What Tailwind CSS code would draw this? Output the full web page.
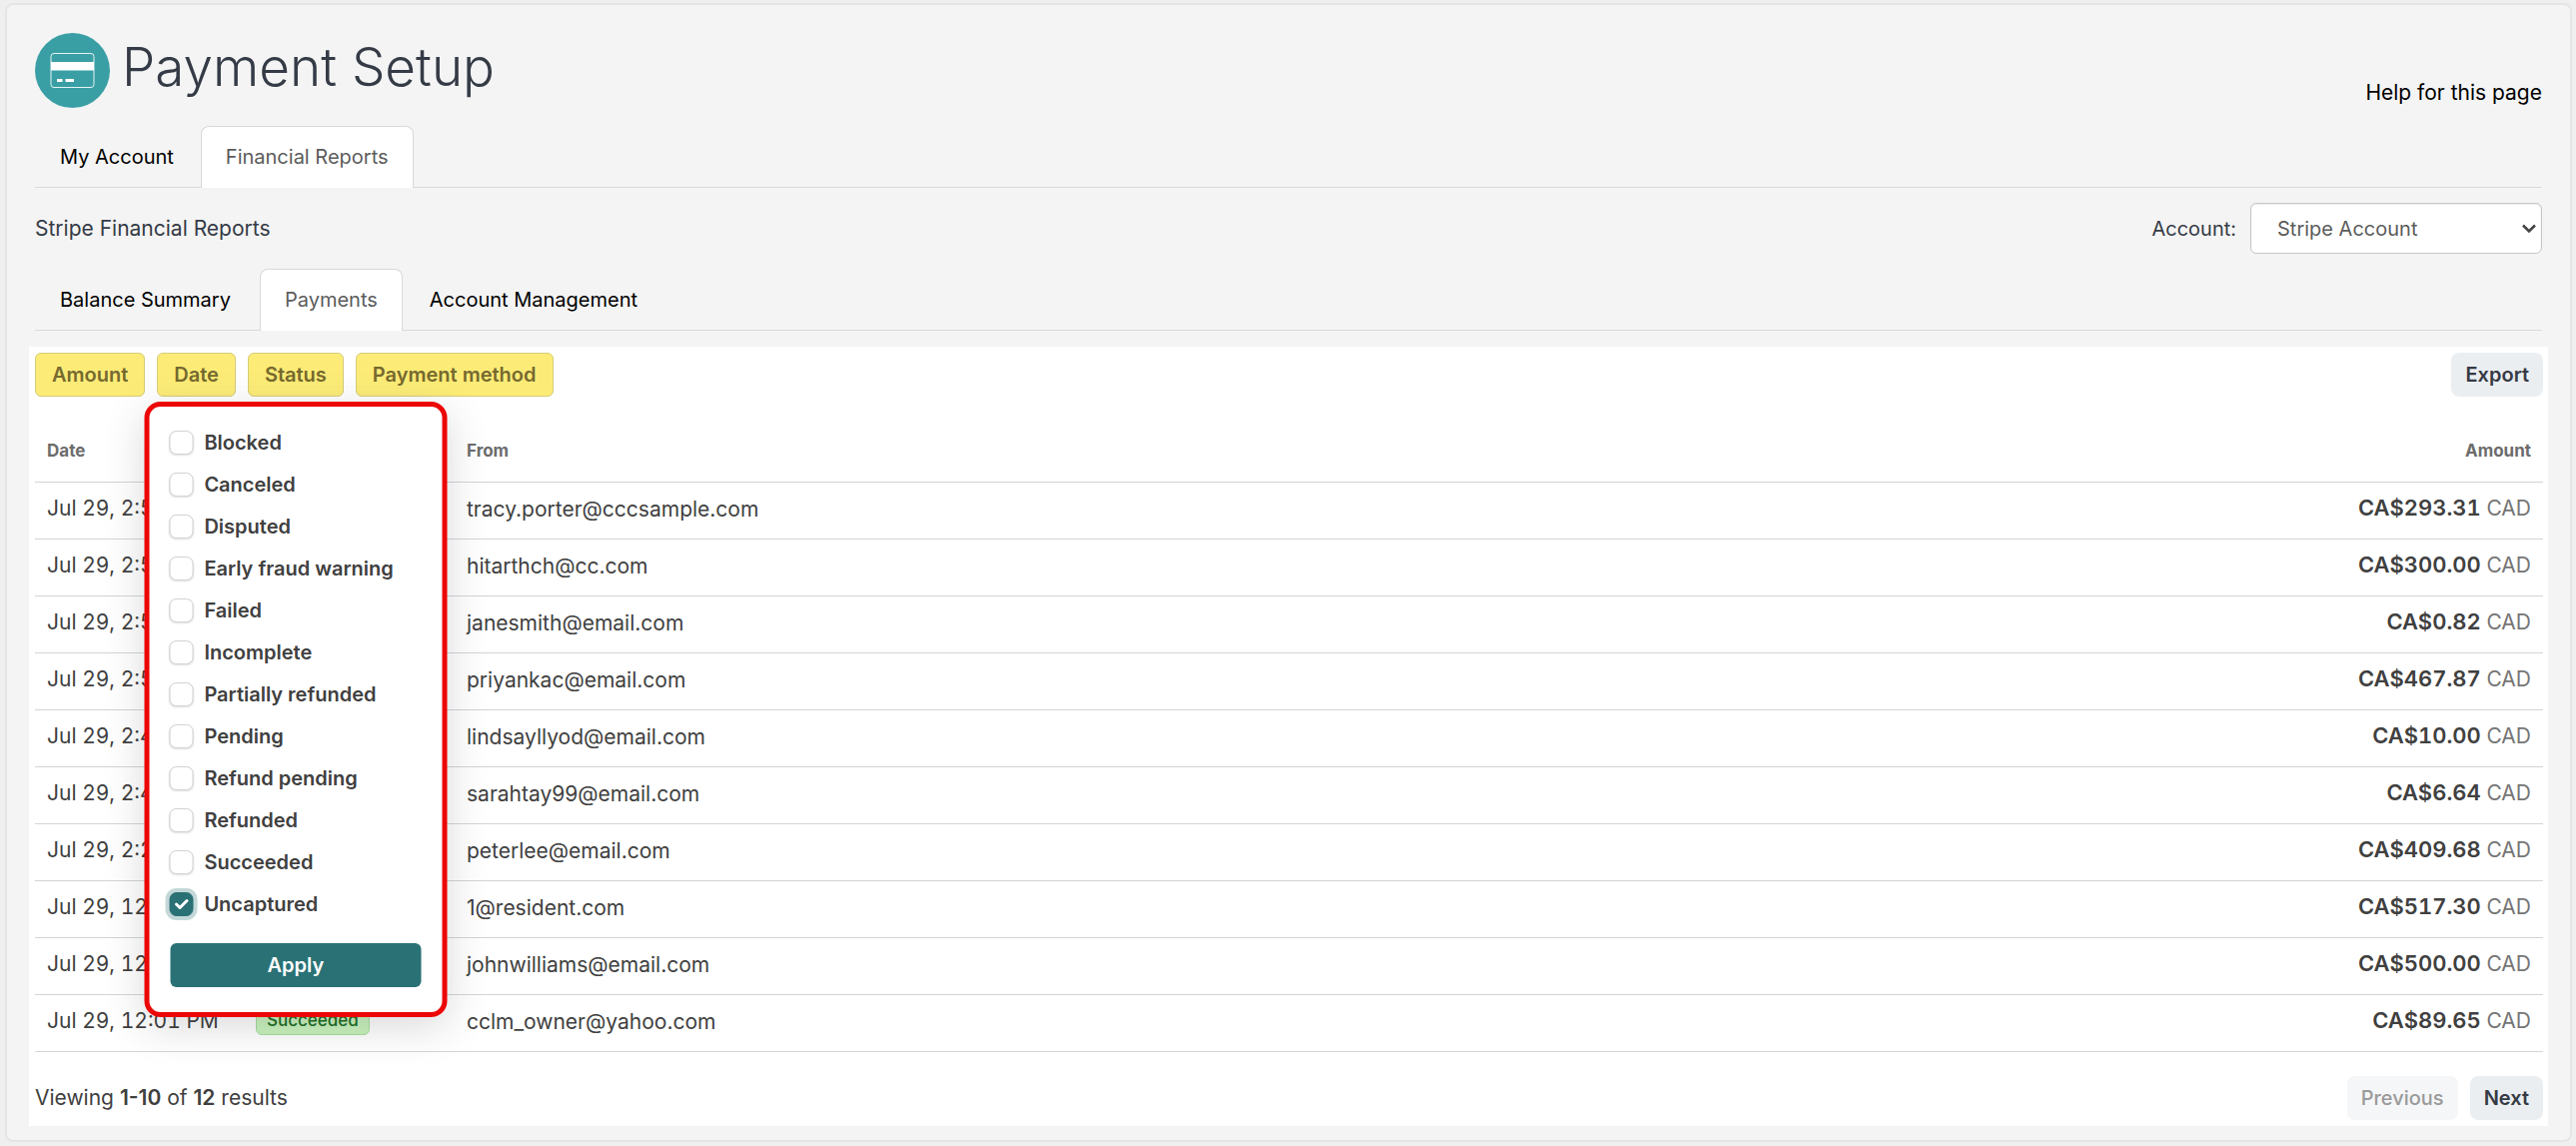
<!DOCTYPE html>
<html lang="en">
<head>
<meta charset="utf-8">
<title>Payment Setup</title>
<script src="https://cdn.jsdelivr.net/npm/@tailwindcss/browser@4"></script>
</head>
<body class="min-h-screen bg-[#efefef] pt-[3px] pr-1 pb-1 pl-[5px] font-['Inter',sans-serif] text-[20px] leading-7 text-[#353b46]">
<main class="rounded-lg border-2 border-[#e5e5e5] bg-[#f4f4f4] px-[22px] pt-7 pb-[14px]">
  <header class="flex items-start justify-between px-1.5">
    <div class="flex items-center gap-3">
      <svg class="h-[75px] w-[75px]" viewBox="0 0 75 75" aria-hidden="true">
        <circle cx="37.500" cy="37.500" r="37.500" fill="#3a9fa5"/>
        <rect x="16" y="20.500" width="43" height="34" rx="3" fill="none" stroke="#e3f3f3"/>
        <path d="M16 29h43v8.500H16z" fill="#fff"/>
        <path d="M22 46h5.500v3H22zM30.500 46H39v3h-8.500z" fill="#fff"/>
      </svg>
      <h1 class="pb-2 text-[53px] leading-[60px] font-light">Payment Setup</h1>
    </div>
    <a href="#help" class="pt-[46px] text-[21px] text-black">Help for this page</a>
  </header>

  <nav class="mx-1.5 mt-[18px] flex border-b border-[#d9d9d9] text-black" aria-label="Sections">
    <a href="#account" class="-mb-px border border-transparent px-6 pt-4 pb-4">My Account</a>
    <a href="#reports" class="-mb-px ml-0.5 rounded-t-lg border border-b-0 border-[#d9d9d9] bg-white px-6 pt-4 pb-4 text-[#5c5c5c]">Financial Reports</a>
  </nav>

  <div class="mx-1.5 mt-[15px] flex items-center justify-between">
    <h2 class="text-[21px]">Stripe Financial Reports</h2>
    <div class="flex items-center gap-[14px]">
      <label for="acct">Account:</label>
      <div class="relative">
        <select id="acct" class="block h-[51px] w-[292px] appearance-none rounded-md border border-[#c6c6c6] bg-white pl-[26px] text-[#5c5c5c] shadow-[inset_0_1px_2px_rgba(0,0,0,0.08)]"><option>Stripe Account</option></select>
        <svg class="pointer-events-none absolute top-5 right-[5px] h-3 w-4" viewBox="0 0 16 12" fill="none" stroke="#444" stroke-width="2.500" aria-hidden="true"><path d="M2 2.500l6 6 6-6"/></svg>
      </div>
    </div>
  </div>

  <nav class="mx-1.5 mt-[15px] flex border-b border-[#d9d9d9] text-black" aria-label="Stripe reports">
    <a href="#balance" class="-mb-px border border-transparent px-6 pt-4 pb-4">Balance Summary</a>
    <a href="#payments" class="-mb-px ml-1 rounded-t-lg border border-b-0 border-[#d9d9d9] bg-white px-6 pt-4 pb-4 text-[#5c5c5c]">Payments</a>
    <a href="#management" class="-mb-px ml-0.5 border border-transparent px-6 pt-4 pb-4">Account Management</a>
  </nav>

  <section class="mt-4 bg-white pt-1.5 pr-[5px] pb-1.5 pl-1.5 text-[#404040]">
    <div class="flex items-start justify-between">
      <div class="flex gap-3 font-semibold text-[#76692f]">
        <button class="h-11 rounded-md border border-[#d5cc7a] bg-[#fcec77] px-4">Amount</button>
        <button class="h-11 rounded-md border border-[#d5cc7a] bg-[#fcec77] px-4">Date</button>
        <div class="relative">
          <button class="h-11 rounded-md border border-[#d5cc7a] bg-[#fcec77] px-4" aria-expanded="true">Status</button>
          <form class="absolute top-[49px] left-1/2 z-10 w-[303px] -translate-x-1/2 rounded-2xl border-5 border-[#ec0606] bg-white px-[21px] pt-[15px] pb-[25px] text-[#404040] shadow-[0_10px_40px_rgba(48,49,61,0.18)]">
            <div id="statuses" class="-ml-px"></div>
            <button type="button" class="mt-[18px] h-11 w-full rounded-md bg-[#2a7175] text-white">Apply</button>
          </form>
        </div>
        <button class="h-11 rounded-md border border-[#d5cc7a] bg-[#fcec77] px-4">Payment method</button>
      </div>
      <button class="h-11 rounded-lg bg-[#ebeef1] px-[14px] font-semibold text-[#353a44]">Export</button>
    </div>

    <table class="mt-6 w-full table-fixed text-[21px]">
      <thead>
        <tr class="h-[61px] border-b border-[#d2d4d6] text-left text-[17px] text-[#6c6c6c]">
          <th class="w-[209px] px-3 font-bold">Date</th>
          <th class="w-[211px] px-3" aria-label="Status"></th>
          <th class="px-3 font-bold">From</th>
          <th class="w-[300px] px-3 text-right font-bold">Amount</th>
        </tr>
      </thead>
      <tbody id="rows"></tbody>
    </table>

    <footer class="mt-6 flex items-center justify-between">
      <p class="text-[21px]">Viewing <b class="font-semibold">1-10</b> of <b class="font-semibold">12</b> results</p>
      <div class="flex gap-3 font-medium">
        <button class="h-11 rounded-lg bg-[#f5f6f8] px-[14px] text-[#9a9a9a]" disabled>Previous</button>
        <button class="h-11 rounded-lg bg-[#ebeef1] px-[14px] font-semibold text-[#353a44]">Next</button>
      </div>
    </footer>
  </section>
</main>
<script>
const statuses = ['Blocked','Canceled','Disputed','Early fraud warning','Failed','Incomplete','Partially refunded','Pending','Refund pending','Refunded','Succeeded','Uncaptured'];
document.getElementById('statuses').innerHTML = statuses.map((s, i) => `
  <label class="flex h-[42px] items-center gap-[11px]" for="s${i}">
    <span class="relative block h-6 w-6">
      <input id="s${i}" type="checkbox" ${s === 'Uncaptured' ? 'checked' : ''} class="block h-6 w-6 appearance-none rounded-[7px] border border-[#cfd2d6] bg-white shadow-[0_1px_2px_rgba(0,0,0,0.12)] checked:border-[#2a7175] checked:bg-[#2a7175] checked:shadow-[0_0_0_4px_#c4d8d9]">
      ${s === 'Uncaptured' ? '<svg class="pointer-events-none absolute top-1 left-1 h-4 w-4" viewBox="0 0 16 16" fill="none" stroke="#fff" stroke-width="3" stroke-linecap="round" stroke-linejoin="round" aria-hidden="true"><path d="M3 8l3.500 3.500L13.500 4.500"/></svg>' : ''}
    </span>
    <span class="whitespace-nowrap">${s}</span>
  </label>`).join('');

const payments = [
  ['2:57 PM','','tracy.porter@cccsample.com','293.31'],
  ['2:56 PM','','hitarthch@cc.com','300.00'],
  ['2:55 PM','','janesmith@email.com','0.82'],
  ['2:52 PM','','priyankac@email.com','467.87'],
  ['2:48 PM','','lindsayllyod@email.com','10.00'],
  ['2:45 PM','','sarahtay99@email.com','6.64'],
  ['2:21 PM','','peterlee@email.com','409.68'],
  ['12:22 PM','','1@resident.com','517.30'],
  ['12:15 PM','','johnwilliams@email.com','500.00'],
  ['12:01 PM','Succeeded','cclm_owner@yahoo.com','89.65'],
];
document.getElementById('rows').innerHTML = payments.map(([t, status, from, amt]) => `
  <tr class="h-[57px] border-b border-[#d2d4d6]">
    <td class="px-3 pb-1 tabular-nums whitespace-nowrap">Jul 29, ${t}</td>
    <td class="px-3 pb-1">${status ? `<span class="block h-7 w-fit rounded-md border border-[#a6dd9c] bg-[#c9f2bd] px-[10px] text-[17px] leading-6 font-medium text-[#1a6d1f]">${status}</span>` : ''}</td>
    <td class="px-3 pb-0.5">${from}</td>
    <td class="px-3 pb-1 text-right tabular-nums"><span class="text-[22px] font-semibold">CA$${amt}</span> <span class="text-[#757575]">CAD</span></td>
  </tr>`).join('');
</script>
</body>
</html>
